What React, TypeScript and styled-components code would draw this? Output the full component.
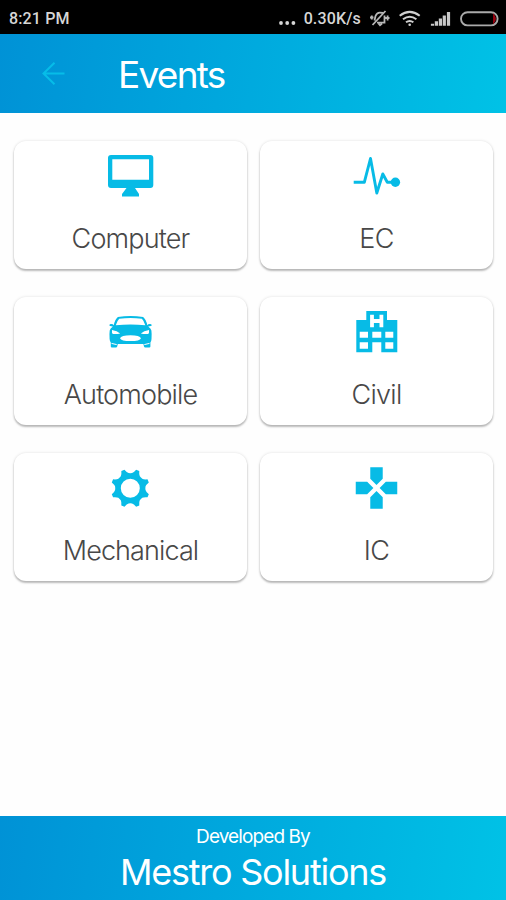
import React from "react";
import styled, { createGlobalStyle } from "styled-components";

const CYAN = "#07bbe6";

const GlobalStyle = createGlobalStyle`
  * { box-sizing: border-box; }
  body { margin: 0; background: #fefefe; font-family: Inter, "Liberation Sans", sans-serif; }
`;

const Screen = styled.div`
  width: 506px;
  height: 900px;
  display: flex;
  flex-direction: column;
  overflow: hidden;
`;

const StatusBar = styled.div`
  height: 34px;
  flex: none;
  background: #000;
  color: #d6d6d6;
  display: flex;
  align-items: center;
  justify-content: space-between;
  padding: 3px 6px 0 9px;
  font: 500 16px/20px Roboto, sans-serif;
`;

const Clock = styled.span`
  letter-spacing: 0.15px;
`;

const StatusIcons = styled.div`
  display: flex;
  align-items: center;
  svg { display: block; }
`;

const Speed = styled.span`
  margin: 0 8px 0 8px;
  letter-spacing: 0.15px;
`;

const Header = styled.header`
  height: 79px;
  flex: none;
  display: flex;
  align-items: center;
  padding-left: 41px;
  background: linear-gradient(98deg, #0092d6 0%, #00c2e6 100%);
`;

const Title = styled.h1`
  margin: 3px 0 0 52px;
  color: #fff;
  font-weight: 400;
  font-size: 37px;
  line-height: 44px;
  letter-spacing: -1.75px;
`;

const Grid = styled.main`
  flex: 1;
  display: grid;
  grid-template-columns: 233px 233px;
  grid-auto-rows: 128px;
  column-gap: 13px;
  row-gap: 28px;
  padding: 28px 0 0 14px;
`;

const Card = styled.div`
  display: flex;
  flex-direction: column;
  align-items: center;
  padding-top: 5px;
  border-radius: 12px;
  background: #fff;
  box-shadow: 0 2px 2px rgba(0, 0, 0, 0.25), 0 0 3px rgba(0, 0, 0, 0.13);
  svg { display: block; flex: none; }
`;

const CardLabel = styled.span<{ $spacing: number }>`
  margin-top: 15px;
  color: #484848;
  font-weight: 300;
  font-size: 27px;
  line-height: 34px;
  letter-spacing: ${(p) => p.$spacing}px;
`;

const Footer = styled.footer`
  height: 84px;
  flex: none;
  display: flex;
  flex-direction: column;
  align-items: center;
  padding-top: 9px;
  color: #fff;
  background: linear-gradient(98deg, #0092d6 0%, #00c2e6 100%);
`;

const Credit = styled.span`
  font-size: 19px;
  line-height: 24px;
  font-weight: 400;
  letter-spacing: -0.9px;
`;

const Company = styled.span`
  font-size: 36px;
  line-height: 46px;
  font-weight: 400;
  letter-spacing: -1.25px;
`;

const CardIcon = ({ children }: { children: React.ReactNode }) => (
  <svg width="61" height="61" viewBox="0 0 61 61" fill={CYAN}>{children}</svg>
);

const ComputerIcon = () => (
  <CardIcon>
    <path fillRule="evenodd" d="M11 9h39.3a3 3 0 0 1 3 3v27a3 3 0 0 1-3 3H35l4 6v2.5H22V48l4.5-6H11a3 3 0 0 1-3-3V12a3 3 0 0 1 3-3zM12.3 13.2v20.6H49V13.2z" />
  </CardIcon>
);

const PulseIcon = () => (
  <CardIcon>
    <path d="M7.7 36.3H18.3L24.5 12.5L30.8 47L36.8 28L41.3 36.3H47" fill="none" stroke={CYAN} strokeWidth="2.9" strokeLinejoin="round" />
    <circle cx="49.4" cy="36.3" r="4.7" />
  </CardIcon>
);

const CarIcon = () => (
  <CardIcon>
    <path fillRule="evenodd" d="M9.4 23.2q0-1.3 1.7-1.3 2.2 0 2.7 1.4 1.1-5.8 4.1-8.2Q30.5 13 43.1 15.1q3 2.4 4.2 8.2.5-1.4 2.6-1.4 1.8 0 1.8 1.3 0 .9-3.5 1.2 2.8 1.7 3.2 4.2.5 3.6.1 8.4-.1 2.4-1.1 3.5v4.1q0 1-1.1 1h-4q-1.1 0-1.3-1l-.6-2.5H17.8l-.6 2.5q-.2 1-1.3 1h-4q-1.1 0-1.1-1v-4.1q-1-1.1-1.2-3.5-.4-4.8.1-8.4.4-2.5 3.2-4.2-3.5-.3-3.5-1.2zM19.2 16.8q-2 2-3.4 6.4 14.7-1.4 29.5 0-1.4-4.4-3.4-6.4-11.3-1.5-22.7 0zM12 28q-.4 3.1.9 3.9 3.6.5 7.3-.4-3-2.6-8.2-3.5zM49 28q-5.2.9-8.2 3.5 3.7.9 7.3.4 1.3-.8.9-3.9zM20 36.2q1 2.9 10.5 2.9T41 36.2q-1.2-3-10.5-3T20 36.2z" />
    <path d="M11.5 41.4l5.2 1.2M49.5 41.4l-5.2 1.2" stroke="#fff" strokeWidth="1" />
  </CardIcon>
);

const BuildingIcon = () => (
  <CardIcon>
    <path fillRule="evenodd" d="M20.3 9H41v9h10.3v32.3H35.3v-10h-9v10h-16V18h10zM13.7 29.7v6H22v-6zM26.3 29.7v6h9v-6zM39.3 29.7v6h8v-6zM13.7 40.3v6.4H22v-6.4zM39.3 40.3v6.4h8v-6.4z" />
    <path d="M26 12.7v12.6M35.4 12.7v12.6M26 19h9.4" stroke="#fff" strokeWidth="3.8" fill="none" />
  </CardIcon>
);

const gearPath = (() => {
  const at = (r: number, deg: number) => {
    const a = (deg * Math.PI) / 180;
    return `${(30.3 + r * Math.cos(a)).toFixed(2)} ${(30.3 + r * Math.sin(a)).toFixed(2)}`;
  };
  let d = "";
  for (let i = 0; i < 8; i++) {
    const c = 22.5 + i * 45;
    d += `${i === 0 ? "M" : "L"}${at(19.4, c - 5)}L${at(19.4, c + 5)}Q${at(16, c + 10)} ${at(15.3, c + 16)}Q${at(14.9, c + 22.5)} ${at(15.3, c + 29)}Q${at(16, c + 35)} ${at(19.4, c + 40)}`;
  }
  return `${d}zM20.8 30.3a9.5 9.5 0 1 0 19 0a9.5 9.5 0 1 0-19 0z`;
})();

const GearIcon = () => (
  <CardIcon>
    <path fillRule="evenodd" d={gearPath} />
  </CardIcon>
);

const GamepadIcon = () => (
  <CardIcon>
    <path transform="translate(5.6 5.1) scale(2.075)" d="M15 7.5V2H9v5.5l3 3zM7.5 9H2v6h5.5l3-3zM9 16.5V22h6v-5.5l-3-3zM16.5 9l-3 3 3 3H22V9z" />
  </CardIcon>
);

const BackArrow = () => (
  <svg width="25" height="25" viewBox="0 0 25 25" fill="none" stroke="#06bde8" strokeWidth="2">
    <path d="M23.5 12.5H3M13.5 1.7L2.5 12.5L13.5 23.3" />
  </svg>
);

const Dots = () => (
  <svg width="17" height="20" viewBox="0 0 17 20" fill="#d6d6d6">
    <circle cx="2" cy="14" r="1.9" /><circle cx="8.2" cy="14" r="1.9" /><circle cx="14.4" cy="14" r="1.9" />
  </svg>
);

const StatusDrawings = () => (
  <svg width="131" height="20" viewBox="0 0 131 20" fill="none" stroke="#b8b8b8">
    <path d="M5.5 11.5l1-4.5Q8 3.5 11 3.7l3 .3M8 13.7h7.5V6.5M9.5 14.5l1.5 1.8 2-1.800M3.500 16L16.500 2M1 8.500h3.500M16 9h4.500M2.800 6.500v4M18.600 6.500v5" strokeWidth="1.8" />
    <g stroke="#d0d0d0" strokeWidth="2">
      <path d="M30.7 6.8q10-7.8 20 0M34 10.3q6.7-5.2 13.4 0M37 13.3q3.7-2.7 7.4 0" />
      <circle cx="40.7" cy="15.8" r="1.3" fill="#d0d0d0" stroke="none" />
    </g>
    <path d="M63.5 16.8v-2M67.4 16.8v-4.5M71.4 16.8V9.5M75.3 16.8V6.5M79.5 16.8V3" stroke="#c8c8c8" strokeWidth="3.2" />
    <rect x="92" y="3.2" width="36.6" height="13.2" rx="6.6" stroke="#aaa" strokeWidth="1.9" />
    <path d="M125 7a5 5 0 0 1 0 5.6z" stroke="#a00010" strokeWidth="1.8" fill="#a00010" />
  </svg>
);

const departments = [
  { name: "Computer", Icon: ComputerIcon, spacing: -0.85 },
  { name: "EC", Icon: PulseIcon, spacing: -0.7 },
  { name: "Automobile", Icon: CarIcon, spacing: -0.85 },
  { name: "Civil", Icon: BuildingIcon, spacing: -0.7 },
  { name: "Mechanical", Icon: GearIcon, spacing: -0.9 },
  { name: "IC", Icon: GamepadIcon, spacing: -0.7 },
];

export default function App() {
  return (
    <>
      <GlobalStyle />
      <Screen>
        <StatusBar>
          <Clock>8:21 PM</Clock>
          <StatusIcons>
            <Dots />
            <Speed>0.30K/s</Speed>
            <StatusDrawings />
          </StatusIcons>
        </StatusBar>
        <Header>
          <BackArrow />
          <Title>Events</Title>
        </Header>
        <Grid>
          {departments.map(({ name, Icon, spacing }) => (
            <Card key={name}>
              <Icon />
              <CardLabel $spacing={spacing}>{name}</CardLabel>
            </Card>
          ))}
        </Grid>
        <Footer>
          <Credit>Developed By</Credit>
          <Company>Mestro Solutions</Company>
        </Footer>
      </Screen>
    </>
  );
}
